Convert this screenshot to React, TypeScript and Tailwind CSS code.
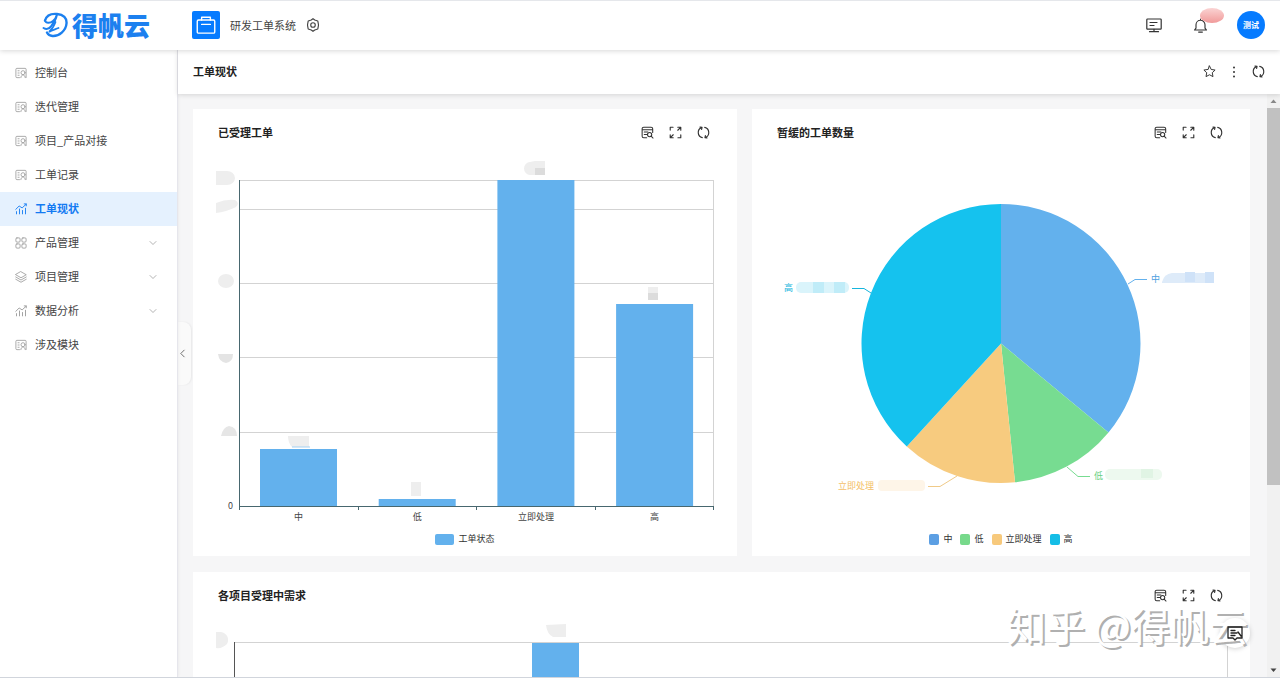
import type { ReactNode } from "react";
import clsx from "clsx";

type IconProps = { className?: string };

function Svg({ className = "size-3", width = 1.1, children }: IconProps & { width?: number; children: ReactNode }) {
  return (
    <svg
      viewBox="0 0 16 16"
      className={className}
      fill="none"
      stroke="currentColor"
      strokeWidth={width}
      strokeLinecap="round"
      strokeLinejoin="round"
      aria-hidden="true"
    >
      {children}
    </svg>
  );
}

const FormIcon = ({ className }: IconProps) => (
  <Svg className={className}>
    <path d="M6 14.200H2.500A1.300 1.300 0 0 1 1.200 12.900V3.100A1.300 1.300 0 0 1 2.500 1.800h11a1.300 1.300 0 0 1 1.300 1.300V14" />
    <path d="M4 5h1.500M4 8h1.500M4 11h1.500M7.800 14.200c.3-2.200 1.300-3.500 2.900-3.500s2.700 1.300 3 3.500" />
    <circle cx="10.700" cy="7.600" r="2.700" />
  </Svg>
);

const TrendIcon = ({ className }: IconProps) => (
  <Svg className={className} width={1.2}>
    <path d="M1 8.5 5.5 4l4 2.5L15 1.5M12.3 1.2H15v2.6M2 11.5v3M6 8v6.5M10 10v4.5M14 7v7.5" />
  </Svg>
);

const GridIcon = ({ className }: IconProps) => (
  <Svg className={className}>
    <rect x="1.2" y="1.2" width="5.6" height="5.6" rx="1.4" />
    <rect x="9.2" y="1.2" width="5.6" height="5.6" rx="1.4" />
    <rect x="1.2" y="9.2" width="5.6" height="5.6" rx="1.4" />
    <rect x="9.2" y="9.2" width="5.6" height="5.6" rx="1.4" />
  </Svg>
);

const LayersIcon = ({ className }: IconProps) => (
  <Svg className={className}>
    <path d="M8 1 15 5 8 9 1 5zM1 8l7 4 7-4M1 11l7 4 7-4" />
  </Svg>
);

const RefreshIcon = ({ className }: IconProps) => (
  <Svg className={className} width={1.4}>
    <path d="M6.500 14.300A6.500 6.500 0 0 1 5.500 2M3.600 1.300 6.200 1.700 5.700 4.300" />
    <path d="M9.500 1.700A6.500 6.500 0 0 1 10.500 14M12.400 14.700 9.800 14.300 10.300 11.700" />
  </Svg>
);

const DetailIcon = ({ className }: IconProps) => (
  <Svg className={className} width={1.3}>
    <path d="M7 14.5H3.4A2 2 0 0 1 1.4 12.5v-9a2 2 0 0 1 2-2h9a2 2 0 0 1 2 2V8M1.6 4.5h12.6M4 7.5h4.5M4 10.5h3" />
    <circle cx="10.6" cy="10.6" r="2.6" />
    <path d="m12.5 12.5 2.3 2.3" />
  </Svg>
);

const ExpandIcon = ({ className }: IconProps) => (
  <Svg className={className} width={1.4}>
    <path d="M1.5 5V1.5H5M14.5 11v3.5H11M10.8 1.5h3.7v3.7M14 2l-3.2 3.2M5.2 14.5H1.5v-3.7M2 14l3.2-3.2" />
  </Svg>
);

const StarIcon = ({ className }: IconProps) => (
  <Svg className={className} width={1.2}>
    <path d="m8 1.2 2.1 4.3 4.8.7-3.5 3.3.9 4.8L8 12l-4.3 2.3.9-4.8L1.1 6.2l4.8-.7z" />
  </Svg>
);

const GearIcon = ({ className }: IconProps) => (
  <Svg className={className} width={1.3}>
    <path d="M8 .8 10 2.300 13.500 3.500 14.200 7.200V8.800L13.500 12.500 10 13.700 8 15.200 6 13.700 2.500 12.500 1.800 8.800V7.200L2.500 3.500 6 2.300z" />
    <circle cx="8" cy="8" r="2.6" />
  </Svg>
);

const MonitorIcon = ({ className }: IconProps) => (
  <Svg className={className} width={1.2}>
    <rect x="0.8" y="2" width="14.4" height="10.2" rx="0.8" />
    <path d="M4 5.5h7M4 8.5h4M8 12.4v2M3.5 14.7h9" />
  </Svg>
);

const BellIcon = ({ className }: IconProps) => (
  <Svg className={className} width={1.2}>
    <path d="M8 1v1.2M1.6 12.8h12.8l-1.6-2V7.2a4.8 4.8 0 0 0-9.6 0v3.6zM6 15h4" />
  </Svg>
);

const MessageIcon = ({ className }: IconProps) => (
  <Svg className={className} width={1.3}>
    <path d="M1 2h14v11h-5l-2 2-2-2H1zM4 5.5h4M4 8h6M4 10.5h4M11 7l3 4" />
  </Svg>
);

const ChevronIcon = ({ className }: IconProps) => (
  <Svg className={className} width={1.5}>
    <path d="m2 5 6 6 6-6" />
  </Svg>
);

const menu = [
  { label: "控制台", icon: FormIcon },
  { label: "迭代管理", icon: FormIcon },
  { label: "项目_产品对接", icon: FormIcon },
  { label: "工单记录", icon: FormIcon },
  { label: "工单现状", icon: TrendIcon, active: true },
  { label: "产品管理", icon: GridIcon, group: true },
  { label: "项目管理", icon: LayersIcon, group: true },
  { label: "数据分析", icon: TrendIcon, group: true },
  { label: "涉及模块", icon: FormIcon },
];

const bars = [
  { name: "中", height: 57 },
  { name: "低", height: 7 },
  { name: "立即处理", height: 326 },
  { name: "高", height: 202 },
];

const slices = [
  { name: "中", value: 36, color: "#63b1ed", swatch: "bg-[#5c9fe3]" },
  { name: "低", value: 12.4, color: "#77dc91", swatch: "bg-[#77d98b]" },
  { name: "立即处理", value: 13.4, color: "#f7cb7f", swatch: "bg-[#f7c97c]" },
  { name: "高", value: 38.2, color: "#15c2ee", swatch: "bg-[#15bde6]" },
];

function Header() {
  return (
    <header className="relative z-20 flex h-[50px] shrink-0 items-center border-t border-gray-200 bg-white pr-[15px] pb-px shadow-[0_1px_5px_rgba(0,0,0,0.16)]">
      <a href="#home" className="flex w-48 shrink-0 items-center gap-1 pl-[42px] text-[#1c80ef]">
        <svg viewBox="0 0 26 26" className="size-[26px]" fill="none" stroke="currentColor" strokeLinecap="round" aria-hidden="true">
          <path d="M3 8.5C4.5 3.5 9.500 1.500 15 2c6.500.5 10 4 9.500 9.500C24 18.500 17 24.500 10.500 24c-2.500-.2-4.500-1.500-5.500-3.500" strokeWidth="2.400" />
          <path d="M3 8.500c1 3 5 3 8 .5 2.500-2 3.500-4.500 4-6.500-1 5-3.500 9-6 12-2 2.500-5 3-7.500 1.500" strokeWidth="2" />
          <path d="M13.500 10c-1.500 4-3 7-6.500 10 3-2 6-2.500 9.500-4" strokeWidth="1.800" />
        </svg>
        <span className="text-[26px] leading-7 font-black">得帆云</span>
      </a>
      <span className="flex size-7 shrink-0 items-center justify-center rounded-xs bg-[#067bff] text-white">
        <Svg className="size-5" width={1.1}>
          <rect x="1" y="4" width="14" height="10.500" rx="1" />
          <path d="M4.500 4V1.800h7V4M4.500 7.500h7" />
        </Svg>
      </span>
      <span className="ml-[10px] text-[11px] text-[#444]">研发工单系统</span>
      <button aria-label="设置" className="ml-[10px] text-[#444]">
        <GearIcon className="size-[14px]" />
      </button>
      <div className="ml-auto flex items-center text-[#333]">
        <button aria-label="工作台">
          <MonitorIcon className="size-4" />
        </button>
        <button aria-label="通知" className="relative ml-[31px]">
          <BellIcon className="size-[15px]" />
          <span className="absolute -top-[10px] left-[7px] h-[15px] w-6 rounded-[50%] bg-linear-to-b from-[#fad3d3] to-[#f09a9a]" />
        </button>
        <button className="ml-[29px] flex size-7 items-center justify-center rounded-full bg-[#067bff] text-[8px] font-bold text-white">
          测试
        </button>
      </div>
    </header>
  );
}

function Sidebar() {
  return (
    <nav className="relative z-10 w-[178px] shrink-0 border-r border-[#e6e6ec] bg-white pt-[6px] shadow-[0_0_3px_rgba(0,0,0,0.08)]">
      {menu.map(({ label, icon: Icon, active, group }) => (
        <a
          key={label}
          href={`#${label}`}
          className={clsx(
            "flex h-[34px] items-center gap-2 pr-[20px] pb-px pl-[15px] text-[11px]",
            active ? "bg-[#e5f1fe] font-bold text-[#137af2]" : "text-[#444]"
          )}
        >
          <Icon className={clsx("size-3", !active && "text-[#999]")} />
          <span>{label}</span>
          {group && <ChevronIcon className="ml-auto size-2 text-[#999]" />}
        </a>
      ))}
    </nav>
  );
}

function Card({ title, className, children }: { title: string; className?: string; children: ReactNode }) {
  return (
    <section className={clsx("min-w-0 bg-white", className)}>
      <div className="flex h-12 items-center justify-between pr-[27px] pb-px pl-[25px]">
        <h2 className="text-[11px] font-bold text-[#222]">{title}</h2>
        <div className="flex gap-[15px] text-[#333]">
          <button aria-label="查看数据">
            <DetailIcon className="size-[13px]" />
          </button>
          <button aria-label="全屏">
            <ExpandIcon className="size-[13px]" />
          </button>
          <button aria-label="刷新">
            <RefreshIcon className="size-[13px]" />
          </button>
        </div>
      </div>
      {children}
    </section>
  );
}

function BarChart() {
  return (
    <>
      <svg viewBox="0 0 544 369" className="block w-full" role="img" aria-label="已受理工单">
        <path d="M46 23.500H521M46 52.500H521M46 126.500H521M46 200.500H521M46 275.500H521M520.500 23V350" stroke="#d3d3d3" />
        {bars.map((bar, i) => (
          <g key={bar.name}>
            <rect x={67 + i * 118.7} y={349 - bar.height} width="77" height={bar.height} fill="#63b1ed" />
            <text x={105.5 + i * 118.7} y="363" textAnchor="middle" fontSize="9" fill="#444">
              {bar.name}
            </text>
          </g>
        ))}
        <path d="M46.500 23V353M46 349.500H521M165.500 350v3M283.500 350v3M402.500 350v3M520.500 350v3" fill="none" stroke="#48676f" />
        <text x="40" y="352" textAnchor="end" fontSize="9" fill="#444">
          0
        </text>
        {/* masked values */}
        <g fill="#eeeeee">
          <path d="M23 14h11a8 7 0 0 1 0 14H23zM23 46q10-4 19-3 5 3 1 7-10 5-20 6z" />
          <ellipse cx="33" cy="124" rx="8" ry="7" />
          <path d="M25 197h15q0 8-7 9-7-1-8-9z" fill="#e4e4e4" />
          <path d="M28 279q2-9 8-10 8 1 8 10z" fill="#e6e6e6" />
          <path d="M95 279h21v11H99q-4-4-4-11z" />
          <rect x="218" y="325" width="10" height="14" />
          <path d="M342 4v14h-5a6 6.500 0 0 1 0-13z" />
          <rect x="342" y="4" width="10" height="7" />
          <rect x="342" y="11" width="10" height="7" fill="#dcdcdc" />
          <rect x="455" y="130" width="10" height="6" />
          <rect x="455" y="136" width="10" height="7" fill="#dcdcdc" />
        </g>
        <path d="M99 290h18" stroke="#a4d0f2" />
      </svg>
      <div className="flex h-[26px] items-center justify-center gap-1 text-[9px] text-[#333]">
        <span className="h-[11px] w-[19px] rounded-xs bg-[#63b1ed]" />
        工单状态
      </div>
    </>
  );
}

const CX = 249;
const CY = 186.5;
const R = 139.5;

function slicePath(from: number, to: number) {
  const point = (percent: number) => {
    const angle = (percent / 100) * Math.PI * 2;
    return `${CX + R * Math.sin(angle)} ${CY - R * Math.cos(angle)}`;
  };
  return `M${CX} ${CY}L${point(from)}A${R} ${R} 0 0 1 ${point(to)}Z`;
}

function PieChart() {
  let start = 0;
  return (
    <>
      <svg viewBox="0 0 498 369" className="block w-full" role="img" aria-label="暂缓的工单数量">
        {slices.map((slice) => {
          const from = start;
          start += slice.value;
          return <path key={slice.name} d={slicePath(from, start)} fill={slice.color} />;
        })}
        <g fill="none">
          <path d="M376 127 383 122.500h12" stroke="#63b1ed" />
          <path d="M119 136 112 131.500h-12" stroke="#15b5dd" />
          <path d="M315 310 326 319.500h12" stroke="#77dc91" />
          <path d="M205 319 188 329.500h-12" stroke="#f0ca88" />
        </g>
        <g fontSize="9">
          <text x="399" y="125" fill="#4f9fe0">中</text>
          <text x="32" y="134" fill="#15b5dd">高</text>
          <text x="342" y="322" fill="#68cf82">低</text>
          <text x="86" y="332" fill="#f4bf69">立即处理</text>
        </g>
        {/* masked values */}
        <path d="M410 125q2-8 10-9h42v10h-52z" fill="#deebf9" />
        <rect x="433" y="115" width="10" height="10" fill="#cfe2f8" />
        <rect x="453" y="115" width="9" height="11" fill="#cfe2f8" />
        <rect x="44" y="125" width="53" height="11" rx="5" fill="#daf4fb" />
        <rect x="61" y="125" width="11" height="11" fill="#c0ecf8" />
        <rect x="82" y="125" width="11" height="11" fill="#c0ecf8" />
        <rect x="353" y="312" width="57" height="11" rx="5" fill="#edf9ef" />
        <rect x="389" y="312" width="12" height="9" fill="#e0f4e4" />
        <rect x="126" y="323" width="47" height="11" rx="4" fill="#fef5e8" />
      </svg>
      <div className="flex h-[26px] items-center justify-center gap-2 text-[9px] text-[#333]">
        {slices.map((slice) => (
          <span key={slice.name} className="flex items-center gap-1">
            <span className={clsx("h-[11px] w-[10px] rounded-xs", slice.swatch)} />
            {slice.name}
          </span>
        ))}
      </div>
    </>
  );
}

function DemandChart() {
  return (
    <svg viewBox="0 0 1057 200" className="block w-full" role="img" aria-label="各项目受理中需求">
      <path d="M41 22.500H1035M1034.500 22V200" stroke="#d3d3d3" />
      <path d="M41.500 22V200" stroke="#555" />
      <rect x="339" y="23" width="47" height="177" fill="#63b1ed" />
      <path d="M23 12h5a8 8 0 0 1 6 12q-5 5-11 4zM353 5l20-1v13h-13q-6-3-7-12z" fill="#eeeeee" />
    </svg>
  );
}

function Scrollbar() {
  return (
    <div className="flex w-[13px] shrink-0 flex-col items-center bg-[#f1f1f1]" aria-hidden="true">
      <svg viewBox="0 0 13 14" className="h-[14px] w-[13px] shrink-0">
        <path d="M3.500 9 6.500 5.500 9.500 9z" fill="#888" />
      </svg>
      <div className="min-h-0 w-full flex-1">
        <div className="h-[68%] w-full bg-[#c1c1c1]" />
      </div>
      <svg viewBox="0 0 13 14" className="h-[14px] w-[13px] shrink-0">
        <path d="M3.500 5.500 6.500 9 9.500 5.500z" fill="#444" />
      </svg>
    </div>
  );
}

export default function App() {
  return (
    <div className="relative flex h-screen flex-col overflow-hidden border-b border-gray-300 bg-[#f6f6f7] font-['Noto_Sans_CJK_SC',sans-serif]">
      <Header />
      <div className="flex min-h-0 flex-1">
        <Sidebar />
        <main className="relative flex min-w-0 flex-1 flex-col">
          <div className="relative z-10 flex h-11 shrink-0 items-center justify-between bg-white pr-[15px] pb-px pl-[15px] shadow-[0_1px_5px_rgba(0,0,0,0.14)]">
            <h1 className="text-[11px] font-bold text-[#222]">工单现状</h1>
            <div className="flex items-center gap-[13px] text-[#333]">
              <button aria-label="收藏">
                <StarIcon className="size-[13px]" />
              </button>
              <button aria-label="更多">
                <svg viewBox="0 0 10 12" className="h-3 w-[10px]" fill="currentColor" aria-hidden="true">
                  <circle cx="5" cy="1.500" r="1" />
                  <circle cx="5" cy="6" r="1" />
                  <circle cx="5" cy="10.500" r="1" />
                </svg>
              </button>
              <button aria-label="刷新">
                <RefreshIcon className="size-[13px]" />
              </button>
            </div>
          </div>
          <div className="flex min-h-0 flex-1">
            <div className="min-w-0 flex-1 overflow-hidden pt-[15px] pr-[17px] pl-[15px]">
              <div className="flex gap-[15px]">
                <Card title="已受理工单" className="flex-[544] pb-1">
                  <BarChart />
                </Card>
                <Card title="暂缓的工单数量" className="flex-[498] pb-1">
                  <PieChart />
                </Card>
              </div>
              <Card title="各项目受理中需求" className="mt-4">
                <DemandChart />
              </Card>
            </div>
            <Scrollbar />
          </div>
          <button
            aria-label="收起菜单"
            className="absolute top-[272px] left-0 flex h-[63px] w-[13px] items-center rounded-r-lg bg-[#fafafa] shadow-[1px_0_2px_rgba(0,0,0,0.06)]"
          >
            <ChevronIcon className="size-[9px] rotate-90 text-[#555]" />
          </button>
        </main>
      </div>
      <div className="absolute right-[30px] bottom-[29px] z-20 size-[30px] rounded-full bg-white shadow-[0_1px_5px_rgba(0,0,0,0.18)]" />
      <div className="pointer-events-none absolute right-[32px] bottom-[26px] z-30 text-[39px] leading-[54px] whitespace-nowrap text-white [text-shadow:2px_2px_0_#b0b0b0]">
        知乎 @得帆云
      </div>
      <button
        aria-label="消息"
        className="absolute right-[30px] bottom-[29px] z-40 flex size-[30px] items-center justify-center rounded-full text-[#222]"
      >
        <MessageIcon className="size-4" />
      </button>
    </div>
  );
}
